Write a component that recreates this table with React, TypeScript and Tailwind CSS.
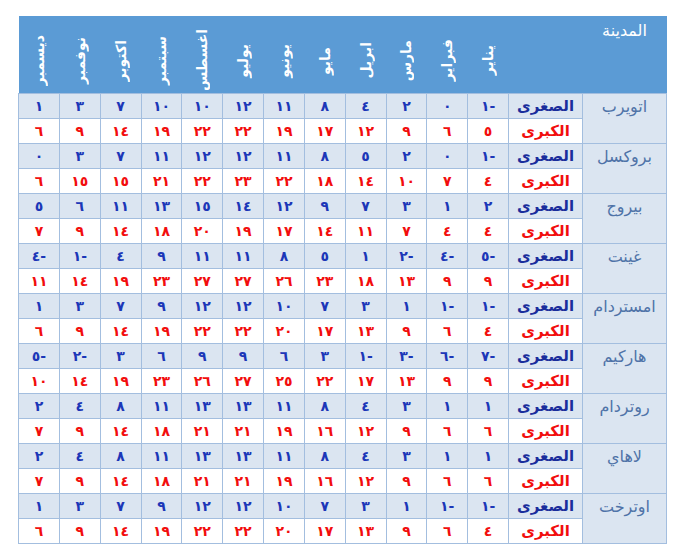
import React from "react";

// Monthly min / max temperatures (°C) for Dutch & Belgian cities, Jan → Dec.
const MONTHS = ["يناير", "فبراير", "مارس", "ابريل", "مايو", "يونيو", "يوليو", "اغسطس", "سبتمبر", "اكتوبر", "نوفمبر", "ديسمبر"];

type City = { name: string; min: number[]; max: number[] };

const CITIES: City[] = [
  { name: "اتويرب", min: [-1, 0, 2, 4, 8, 11, 12, 10, 10, 7, 3, 1], max: [5, 6, 9, 12, 17, 19, 22, 22, 19, 14, 9, 6] },
  { name: "بروكسل", min: [-1, 0, 2, 5, 8, 11, 12, 12, 11, 7, 3, 0], max: [4, 7, 10, 14, 18, 22, 23, 22, 21, 15, 15, 6] },
  { name: "بيروج", min: [2, 1, 3, 7, 9, 12, 14, 15, 13, 11, 6, 5], max: [4, 4, 7, 11, 14, 17, 19, 20, 18, 14, 9, 7] },
  { name: "غينت", min: [-5, -4, -2, 1, 5, 8, 11, 11, 9, 4, -1, -4], max: [9, 9, 13, 18, 23, 26, 27, 27, 23, 19, 14, 11] },
  { name: "امستردام", min: [-1, -1, 1, 3, 7, 10, 12, 12, 9, 7, 3, 1], max: [4, 6, 9, 13, 17, 20, 22, 22, 19, 14, 9, 6] },
  { name: "هاركيم", min: [-7, -6, -3, -1, 3, 6, 9, 9, 6, 3, -2, -5], max: [9, 9, 13, 17, 22, 25, 27, 26, 23, 19, 14, 10] },
  { name: "روتردام", min: [1, 1, 3, 4, 8, 11, 13, 13, 11, 8, 4, 2], max: [6, 6, 9, 12, 16, 19, 21, 21, 18, 14, 9, 7] },
  { name: "لاهاي", min: [1, 1, 3, 4, 8, 11, 13, 13, 11, 8, 4, 2], max: [6, 6, 9, 12, 16, 19, 21, 21, 18, 14, 9, 7] },
  { name: "اوترخت", min: [-1, -1, 1, 3, 7, 10, 12, 12, 9, 7, 3, 1], max: [4, 6, 9, 13, 17, 20, 22, 22, 19, 14, 9, 6] },
];

const DIGITS = "٠١٢٣٤٥٦٧٨٩";
// Visual order, as the sheet shows it: digits first, minus sign trailing on the right.
const ar = (n: number) => String(Math.abs(n)).replace(/\d/g, (d) => DIGITS[+d]) + (n < 0 ? "-" : "");

const cell = "border border-[#a3bedf] text-center align-middle p-0";

function TempRow({ city, kind }: { city: City; kind: "min" | "max" }) {
  const isMin = kind === "min";
  const values = isMin ? city.min : city.max;
  return (
    <tr className={`h-[25px] ${isMin ? "bg-[#dbe5f1]" : "bg-white"}`}>
      {isMin && (
        <td rowSpan={2} className="border border-[#a3bedf] bg-[#dbe5f1] p-0 pt-[1px] text-center align-top text-[16px] leading-[23px] text-[#4f73a8]">
          {city.name}
        </td>
      )}
      <td className={`${cell} text-[15px] font-bold ${isMin ? "text-[#1a2d9c]" : "text-[#f20d0d]"}`}>
        {isMin ? "الصغرى" : "الكبرى"}
      </td>
      {values.map((v, i) => (
        <td key={i} className={`${cell} text-[14px] font-bold ${isMin ? "text-[#1c37b8]" : "text-[#f20d0d]"}`}>
          <bdo dir="ltr">{ar(v)}</bdo>
        </td>
      ))}
    </tr>
  );
}

export default function App() {
  return (
    <div className="min-h-screen bg-white pl-[18px] pt-[16px]" style={{ fontFamily: '"DejaVu Sans", "Noto Sans", sans-serif' }}>
      <table dir="rtl" className="w-[649px] table-fixed border-collapse">
        <colgroup>
          <col className="w-[84px]" />
          <col className="w-[74px]" />
          {MONTHS.map((m) => (
            <col key={m} />
          ))}
        </colgroup>
        <thead>
          <tr className="bg-[#5b9bd5] text-white">
            <th className="h-[77px] p-0 pt-[3px] text-center align-top text-[16px] font-normal">المدينة</th>
            <th className="p-0" />
            {MONTHS.map((m) => (
              <th key={m} className="p-0">
                <div className="flex h-[77px] items-center justify-center pt-[12px]">
                  <span className="rotate-180 text-[14px] font-bold leading-none [writing-mode:vertical-rl]">{m}</span>
                </div>
              </th>
            ))}
          </tr>
        </thead>
        <tbody>
          {CITIES.map((c) => (
            <React.Fragment key={c.name}>
              <TempRow city={c} kind="min" />
              <TempRow city={c} kind="max" />
            </React.Fragment>
          ))}
        </tbody>
      </table>
    </div>
  );
}
